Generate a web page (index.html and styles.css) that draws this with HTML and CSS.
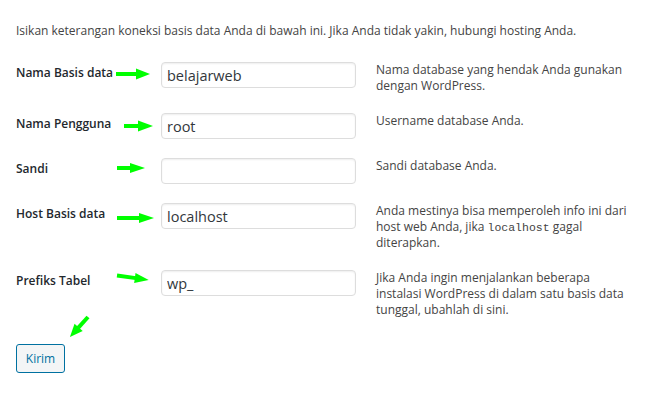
FILE: index.html
```html
<!DOCTYPE html>
<html lang="id">
  <head>
    <meta charset="UTF-8" />
    <meta name="viewport" content="width=device-width, initial-scale=1.0" />
    <title>Pengaturan Basis Data</title>
    <link rel="stylesheet" href="styles.css">
  </head>
  <body>
    <div class="page">
      <p class="intro">Isikan keterangan koneksi basis data Anda di bawah ini. Jika Anda tidak yakin, hubungi hosting Anda.</p>

      <form class="setup">
        <div class="row">
          <label class="label" for="dbname">Nama Basis data</label>
          <input class="field" type="text" id="dbname" name="dbname" value="belajarweb" />
          <p class="desc">Nama database yang hendak Anda gunakan dengan WordPress.</p>
        </div>

        <div class="row">
          <label class="label" for="uname">Nama Pengguna</label>
          <input class="field" type="text" id="uname" name="uname" value="root" />
          <p class="desc">Username database Anda.</p>
        </div>

        <div class="row">
          <label class="label" for="pwd">Sandi</label>
          <input class="field" type="text" id="pwd" name="pwd" value="" />
          <p class="desc">Sandi database Anda.</p>
        </div>

        <div class="row">
          <label class="label" for="dbhost">Host Basis data</label>
          <input class="field" type="text" id="dbhost" name="dbhost" value="localhost" />
          <p class="desc">Anda mestinya bisa memperoleh info ini dari host web Anda, jika <code>localhost</code> gagal diterapkan.</p>
        </div>

        <div class="row">
          <label class="label" for="prefix">Prefiks Tabel</label>
          <input class="field" type="text" id="prefix" name="prefix" value="wp_" />
          <p class="desc">Jika Anda ingin menjalankan beberapa instalasi WordPress di dalam satu basis data tunggal, ubahlah di sini.</p>
        </div>

        <button type="submit" class="button">Kirim</button>
      </form>

      <!-- green annotation arrows drawn over the form -->
      <svg class="arrows" width="663" height="394" viewBox="0 0 663 394">
        <g fill="#00ff00" stroke="#00ff00">
          <line x1="116" y1="74" x2="137" y2="74" stroke-width="4" />
          <polygon points="136,68.5 150,74 136,79.5" stroke="none" />

          <line x1="124" y1="126" x2="139" y2="126" stroke-width="4" />
          <polygon points="138,120.5 153,126 138,131.5" stroke="none" />

          <line x1="117" y1="168" x2="131" y2="168" stroke-width="4" />
          <polygon points="130,163 145,168 130,173" stroke="none" />

          <line x1="117" y1="218" x2="140" y2="218" stroke-width="4" />
          <polygon points="139,213 154,218 139,223" stroke="none" />

          <g transform="translate(117 275.5) rotate(8)">
            <line x1="0" y1="0" x2="19" y2="0" stroke-width="4" />
            <polygon points="18,-5 32,0 18,5" stroke="none" />
          </g>

          <g transform="translate(88 317) rotate(132)">
            <line x1="0" y1="0" x2="15" y2="0" stroke-width="4" />
            <polygon points="14,-5.5 27,0 14,5.5" stroke="none" />
          </g>
        </g>
      </svg>
    </div>
  </body>
</html>
```

FILE: styles.css
```css
body {
  font-family: "Open Sans", Arial, sans-serif;
  margin: 0;
  color: #444;
  background: #fff;
}
.page {
  position: relative;
  width: 663px;
  height: 394px;
  padding: 22px 16px 0;
  box-sizing: border-box;
  overflow: hidden;
}
.intro {
  font-size: 12px;
  line-height: 18px;
  margin: 0 0 13px;
}
.row {
  display: grid;
  grid-template-columns: 145px 195px 276px;
  align-items: start;
  padding: 9px 0 10px;
}
.label {
  font-size: 12px;
  font-weight: 600;
  line-height: 16px;
  color: #23282d;
  margin-top: 3px;
}
.field {
  width: 195px;
  height: 26px;
  box-sizing: border-box;
  margin: 0;
  padding: 0 5px;
  border: 1px solid #ddd;
  border-radius: 4px;
  box-shadow: inset 0 1px 2px rgba(0, 0, 0, 0.07);
  font-family: inherit;
  font-size: 14.5px;
  color: #32373c;
}
.desc {
  margin: 0;
  padding-left: 20px;
  font-size: 12px;
  line-height: 16px;
}
.desc code {
  font-family: "Liberation Mono", monospace;
  font-size: 11.5px;
  line-height: 1;
}
.button {
  display: block;
  width: 49px;
  height: 29px;
  margin-top: 16px;
  padding: 0;
  border: 1px solid #0071a1;
  border-radius: 3px;
  background: #f3f5f6;
  color: #0071a1;
  font-family: inherit;
  font-size: 12px;
  cursor: pointer;
}
.arrows {
  position: absolute;
  top: 0;
  left: 0;
  pointer-events: none;
}
```
